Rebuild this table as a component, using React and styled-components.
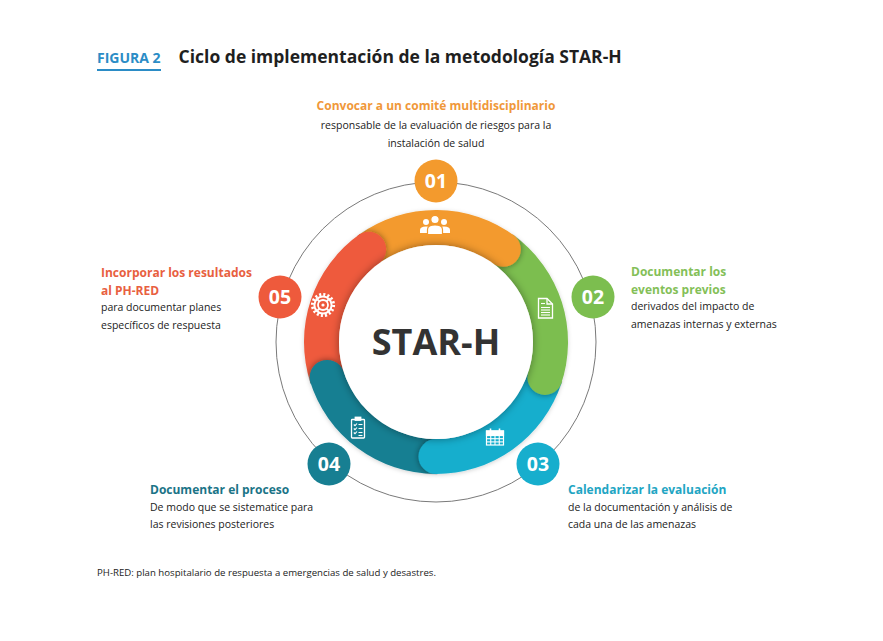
import React from "react";
import styled, { createGlobalStyle } from "styled-components";

const Global = createGlobalStyle`
  html, body { margin: 0; padding: 0; background: #ffffff; }
  body { font-family: "Open Sans", "Noto Sans", sans-serif; color: #222; }
`;

const Page = styled.div`
  width: 883px;
  height: 641px;
  background: #fff;
  overflow: hidden;
`;

const Header = styled.header`
  box-sizing: border-box;
  height: 90px;
  padding: 44px 0 0 97px;
  display: flex;
  align-items: baseline;
  gap: 18px;
`;

const FigTag = styled.span`
  font-size: 14px;
  line-height: 14px;
  font-weight: 700;
  color: #2b8cc6;
  padding-bottom: 4px;
  border-bottom: 2px solid #2b8cc6;
  white-space: nowrap;
`;

const Title = styled.h1`
  margin: 0;
  font-size: 17.5px;
  line-height: 24px;
  font-weight: 700;
  color: #1f1f1f;
  white-space: nowrap;
`;

const Canvas = styled.div`
  position: relative;
  width: 883px;
  height: 460px;
`;

const Diagram = styled.svg`
  display: block;
`;

const Label = styled.div`
  position: absolute;
  left: ${(p) => p.$left}px;
  top: ${(p) => p.$top}px;
  width: ${(p) => p.$width || 220}px;
  text-align: ${(p) => (p.$center ? "center" : "left")};
  white-space: nowrap;
`;

const LabelTitle = styled.div`
  font-size: 12px;
  line-height: ${(p) => (p.$gap ? "18px" : "17.5px")};
  margin-bottom: ${(p) => (p.$gap ? "2px" : "0")};
  font-weight: 700;
  color: ${(p) => p.$color};
`;

const LabelBody = styled.div`
  font-size: 10.5px;
  line-height: 17.5px;
  color: #222;
`;

const Footnote = styled.p`
  margin: 16px 0 0 0;
  padding-left: 97px;
  font-size: 9.65px;
  line-height: 14px;
  color: #222;
`;

const CX = 436;
const CY = 342;
const R_IN = 97;
const R_OUT = 132;
const R_MID = (R_IN + R_OUT) / 2;
const TH = R_OUT - R_IN;

const rad = (d) => (d * Math.PI) / 180;
const polar = (r, d) => [CX + r * Math.sin(rad(d)), CY - r * Math.cos(rad(d))];

const sector = (r1, r2, a1, a2) => {
  const [x1, y1] = polar(r2, a1);
  const [x2, y2] = polar(r2, a2);
  const [x3, y3] = polar(r1, a2);
  const [x4, y4] = polar(r1, a1);
  return `M${x1},${y1} A${r2},${r2} 0 0 1 ${x2},${y2} L${x3},${y3} A${r1},${r1} 0 0 0 ${x4},${y4} Z`;
};

const ORANGE = "#F39A2D";
const GREEN = "#7CBE4F";
const CYAN = "#17AECD";
const TEAL = "#177F92";
const RED = "#EE5A3C";

const segments = [
  { c: ORANGE, a1: -36, a2: 36 },
  { c: GREEN, a1: 36, a2: 108 },
  { c: CYAN, a1: 108, a2: 180 },
  { c: TEAL, a1: 180, a2: 252 },
  { c: RED, a1: 252, a2: 324 },
];

const badges = [
  { n: "01", x: 436, y: 181, c: ORANGE },
  { n: "02", x: 593, y: 297, c: GREEN },
  { n: "03", x: 538, y: 464, c: CYAN },
  { n: "04", x: 329, y: 464, c: TEAL },
  { n: "05", x: 280, y: 297, c: RED },
];

const PeopleIcon = () => (
  <g fill="#fff">
    <circle cx="426" cy="222" r="3" />
    <circle cx="444" cy="222" r="3" />
    <path d="M420,233 L420,230 Q420,226.5 426,226.5 Q432,226.5 432,230 L432,233 Z" />
    <path d="M438,233 L438,230 Q438,226.5 444,226.5 Q450,226.5 450,230 L450,233 Z" />
    <circle cx="435" cy="219.5" r="4.2" stroke={ORANGE} strokeWidth="1.2" />
    <path
      d="M427.5,234.5 L427.5,229.5 Q427.5,225 435,225 Q442.5,225 442.5,229.5 L442.5,234.5 Z"
      stroke={ORANGE}
      strokeWidth="1.2"
    />
  </g>
);

const GearIcon = () => {
  const cx = 323;
  const cy = 305;
  const spokes = [45, 135, 225, 315].map((a) => {
    const r1 = 4.5;
    const r2 = 8;
    return (
      <line
        key={a}
        x1={cx + r1 * Math.cos(rad(a))}
        y1={cy + r1 * Math.sin(rad(a))}
        x2={cx + r2 * Math.cos(rad(a))}
        y2={cy + r2 * Math.sin(rad(a))}
        stroke="#fff"
        strokeWidth="2"
      />
    );
  });
  return (
    <g>
      <circle cx={cx} cy={cy} r="10.6" fill="none" stroke="#fff" strokeWidth="3" strokeDasharray="2.08 2.08" />
      <circle cx={cx} cy={cy} r="9.6" fill="#fff" />
      <circle cx={cx} cy={cy} r="7.6" fill={RED} />
      <circle cx={cx} cy={cy} r="5" fill="none" stroke="#fff" strokeWidth="1.8" />
      {spokes}
      <circle cx={cx} cy={cy} r="1.6" fill="#fff" />
    </g>
  );
};

const DocIcon = () => (
  <g fill="none" stroke="#fff" strokeWidth="1.3">
    <path d="M538.5,298.5 L547,298.5 L552.5,304 L552.5,318 L538.5,318 Z" />
    <path d="M547,298.5 L547,304 L552.5,304" />
    <g strokeWidth="1.1">
      <line x1="541" y1="303.5" x2="545" y2="303.5" />
      <line x1="541" y1="307.5" x2="550" y2="307.5" />
      <line x1="541" y1="310" x2="550" y2="310" />
      <line x1="541" y1="312.5" x2="550" y2="312.5" />
      <line x1="541" y1="315" x2="550" y2="315" />
    </g>
  </g>
);

const ClipboardIcon = () => (
  <g fill="none" stroke="#fff" strokeWidth="1.3">
    <rect x="351.5" y="419.5" width="13" height="18.5" rx="0.8" />
    <rect x="355" y="417" width="6" height="3.5" fill="#fff" strokeWidth="0.8" />
    <g strokeWidth="1.1">
      <path d="M353.8,424.5 l1.2,1.2 l2,-2.2" />
      <line x1="358.5" y1="424.5" x2="362.5" y2="424.5" />
      <path d="M353.8,428.5 l1.2,1.2 l2,-2.2" />
      <line x1="358.5" y1="428.5" x2="362.5" y2="428.5" />
      <path d="M353.8,432.5 l1.2,1.2 l2,-2.2" />
      <line x1="358.5" y1="432.5" x2="362.5" y2="432.5" />
      <line x1="358.5" y1="435.5" x2="362.5" y2="435.5" />
    </g>
  </g>
);

const CalendarIcon = () => {
  const x0 = 486.5;
  const y0 = 431;
  const w = 17;
  const h = 14;
  const cols = [0, 1, 2, 3, 4].map((i) => x0 + (w * i) / 4);
  const rows = [y0 + 4.5, y0 + 7.7, y0 + 10.9, y0 + h];
  return (
    <g stroke="#fff" fill="none">
      <rect x={x0} y={y0} width={w} height={h} strokeWidth="1.2" />
      <rect x={x0} y={y0} width={w} height="4.5" fill="#fff" strokeWidth="1.2" />
      {rows.slice(1, 3).map((y) => (
        <line key={y} x1={x0} y1={y} x2={x0 + w} y2={y} strokeWidth="1.1" />
      ))}
      {cols.slice(1, 4).map((x) => (
        <line key={x} x1={x} y1={y0 + 4.5} x2={x} y2={y0 + h} strokeWidth="1.1" />
      ))}
      <line x1={x0 + 4} y1={y0 - 2.5} x2={x0 + 4} y2={y0 + 1.5} strokeWidth="1.6" />
      <line x1={x0 + w - 4} y1={y0 - 2.5} x2={x0 + w - 4} y2={y0 + 1.5} strokeWidth="1.6" />
    </g>
  );
};

const Cycle = () => (
  <Diagram width="883" height="460" viewBox="0 90 883 460">
    <defs>
      <filter id="capShadow" x="-50%" y="-50%" width="200%" height="200%">
        <feDropShadow dx="0" dy="0" stdDeviation="3" floodColor="#000" floodOpacity="0.45" />
      </filter>
      <filter id="ringShadow" x="-20%" y="-20%" width="140%" height="140%">
        <feDropShadow dx="0" dy="1" stdDeviation="2" floodColor="#000" floodOpacity="0.18" />
      </filter>
      <filter id="innerShadow" x="-20%" y="-20%" width="140%" height="140%">
        <feDropShadow dx="0" dy="0" stdDeviation="4" floodColor="#000" floodOpacity="0.4" />
      </filter>
      {segments.map((s, i) => (
        <clipPath id={`capClip${i}`} key={i}>
          <path d={sector(R_IN - 0.5, R_OUT + 0.5, s.a2 - 0.6, s.a2 + 45)} />
        </clipPath>
      ))}
    </defs>

    <circle cx={CX} cy={CY} r="160" fill="none" stroke="#7a7a7a" strokeWidth="1" />

    <g filter="url(#ringShadow)">
      {segments.map((s, i) => (
        <path key={i} d={sector(R_IN, R_OUT, s.a1, s.a2 + 1)} fill={s.c} />
      ))}
    </g>

    {segments.map((s, i) => {
      const [x, y] = polar(R_MID, s.a2);
      return (
        <g key={i} clipPath={`url(#capClip${i})`}>
          <circle cx={x} cy={y} r={TH / 2} fill={s.c} filter="url(#capShadow)" />
        </g>
      );
    })}

    <circle cx={CX} cy={CY} r={R_IN} fill="#fff" filter="url(#innerShadow)" />

    <text
      x={CX}
      y={CY + 13}
      textAnchor="middle"
      fontFamily="'Open Sans', 'Noto Sans', sans-serif"
      fontWeight="700"
      fontSize="36"
      fill="#333333"
    >
      STAR-H
    </text>

    <PeopleIcon />
    <GearIcon />
    <DocIcon />
    <ClipboardIcon />
    <CalendarIcon />

    {badges.map((b) => (
      <g key={b.n}>
        <circle cx={b.x} cy={b.y} r="21.5" fill={b.c} />
        <text
          x={b.x}
          y={b.y + 7}
          textAnchor="middle"
          fontFamily="'Open Sans', 'Noto Sans', sans-serif"
          fontWeight="700"
          fontSize="19.5"
          fill="#fff"
        >
          {b.n}
        </text>
      </g>
    ))}
  </Diagram>
);

export default function App() {
  return (
    <Page>
      <Global />
      <Header>
        <FigTag>FIGURA 2</FigTag>
        <Title>Ciclo de implementación de la metodología STAR-H</Title>
      </Header>
      <Canvas>
        <Cycle />
        <Label $left={236} $top={7} $width={400} $center>
          <LabelTitle $color="#F0983A" $gap>Convocar a un comité multidisciplinario</LabelTitle>
          <LabelBody>
            responsable de la evaluación de riesgos para la
            <br />
            instalación de salud
          </LabelBody>
        </Label>
        <Label $left={101} $top={174}>
          <LabelTitle $color="#E8603F">
            Incorporar los resultados
            <br />
            al PH-RED
          </LabelTitle>
          <LabelBody>
            para documentar planes
            <br />
            específicos de respuesta
          </LabelBody>
        </Label>
        <Label $left={631} $top={173}>
          <LabelTitle $color="#84BF58">
            Documentar los
            <br />
            eventos previos
          </LabelTitle>
          <LabelBody>
            derivados del impacto de
            <br />
            amenazas internas y externas
          </LabelBody>
        </Label>
        <Label $left={150} $top={391}>
          <LabelTitle $color="#1B7487">Documentar el proceso</LabelTitle>
          <LabelBody>
            De modo que se sistematice para
            <br />
            las revisiones posteriores
          </LabelBody>
        </Label>
        <Label $left={568} $top={391}>
          <LabelTitle $color="#22A5C3">Calendarizar la evaluación</LabelTitle>
          <LabelBody>
            de la documentación y análisis de
            <br />
            cada una de las amenazas
          </LabelBody>
        </Label>
      </Canvas>
      <Footnote>PH-RED: plan hospitalario de respuesta a emergencias de salud y desastres.</Footnote>
    </Page>
  );
}
